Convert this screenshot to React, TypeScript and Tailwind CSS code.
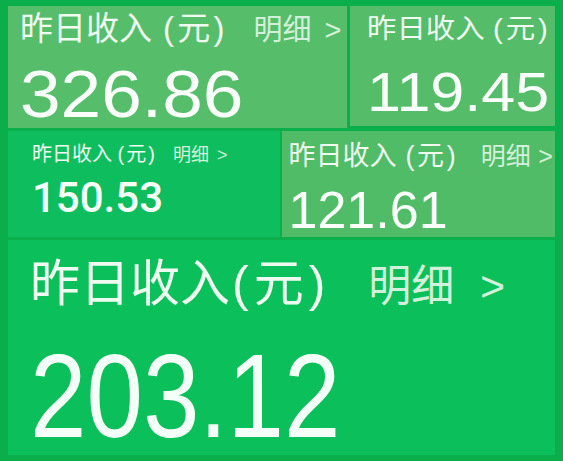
const font = "font-['Liberation_Sans','Noto_Sans_CJK_SC',sans-serif]";

function Title({
  size,
  detail,
  gap = "ml-[0.28em]",
  arrowGap = "ml-[0.45em]",
  showDetail = true,
}: {
  size: string;
  detail: string;
  gap?: string;
  arrowGap?: string;
  showDetail?: boolean;
}) {
  return (
    <div className={`flex items-baseline whitespace-nowrap leading-none ${size}`}>
      <span className="text-[#effaf1]">
        昨日收入<span className={gap}>(</span>
        <span className="px-[0.1em]">元</span>)
      </span>
      {showDetail && (
        <span className={`ml-[1em] text-[#d3f0da] ${detail}`}>
          明细<span className={arrowGap}>&gt;</span>
        </span>
      )}
    </div>
  );
}

export default function App() {
  return (
    <div
      className={`w-[563px] h-[461px] overflow-hidden bg-[#0aaf4c] pt-[6px] px-[8px] flex flex-col gap-[3px] ${font}`}
    >
      {/* top row */}
      <div className="flex gap-[3px] h-[122px] items-start">
        <div className="w-[339px] h-[122px] bg-[#56be6b] pt-[6px] pl-[12px]">
          <Title size="text-[33px]" detail="text-[29px]" gap="ml-[0.33em]" />
          <div className="mt-[15px] text-[67px] leading-none text-[#fbfffb] origin-left scale-x-[1.09]">
            326.86
          </div>
        </div>
        <div className="w-[205px] h-[120px] bg-[#55bd69] pt-[10px] pl-[17px]">
          <div className="origin-left scale-x-[1.09]">
            <Title size="text-[27px]" detail="text-[24px]" showDetail={false} />
            <div className="mt-[21px] text-[56px] leading-none text-[#fbfffb]">119.45</div>
          </div>
        </div>
      </div>

      {/* middle row */}
      <div className="flex gap-[2px] h-[106px]">
        <div className="w-[272px] h-[106px] bg-[#0ebe5e] pt-[13px] pl-[24px]">
          <Title size="text-[20px]" detail="text-[18px]" />
          <div className="mt-[13px] text-[42px] leading-none font-medium text-[#f7fff9] font-['Roboto',sans-serif]">
            150.53
          </div>
        </div>
        <div className="w-[274px] h-[106px] bg-[#51bc67] pt-[12px] pl-[7px]">
          <Title size="text-[27px]" detail="text-[25px]" gap="ml-[0.33em]" arrowGap="ml-[0.3em]" />
          <div className="mt-[14px] text-[52px] leading-none text-[#fbfffb]">121.61</div>
        </div>
      </div>

      {/* bottom panel */}
      <div className="w-[547px] h-[215px] bg-[#0bbf5b] pt-[19px] pl-[22px]">
        <Title
          size="text-[50px]"
          detail="text-[43px] text-[#c9f5d8]"
          gap="ml-[0.04em]"
          arrowGap="ml-[0.6em]"
        />
        <div className="mt-[28px] text-[118px] leading-none text-[#f4fff7] origin-left scale-x-[0.86]">
          203.12
        </div>
      </div>
    </div>
  );
}
